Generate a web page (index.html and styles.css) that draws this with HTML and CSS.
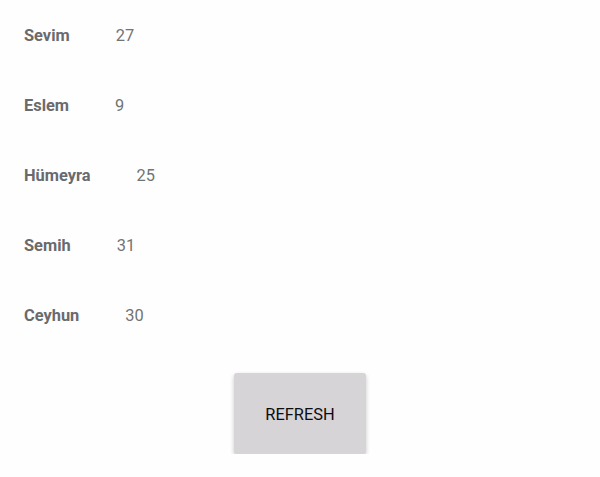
FILE: index.html
```html
<!DOCTYPE html>
<html>
<head>
<meta charset="utf-8">
<link rel="stylesheet" href="styles.css">
</head>
<body>
<div class="list">
  <div class="row"><span class="name">Sevim</span><span class="age">27</span></div>
  <div class="row"><span class="name">Eslem</span><span class="age">9</span></div>
  <div class="row"><span class="name">Hümeyra</span><span class="age">25</span></div>
  <div class="row"><span class="name">Semih</span><span class="age">31</span></div>
  <div class="row"><span class="name">Ceyhun</span><span class="age">30</span></div>
</div>
<div class="actions">
  <button class="refresh">REFRESH</button>
</div>
</body>
</html>
```
FILE: styles.css
```css
html, body {
  margin: 0;
  padding: 0;
  background: #fefefe;
  font-family: Roboto, "Liberation Sans", sans-serif;
}
.list {
  display: flex;
  flex-direction: column;
  padding-left: 24px;
}
.row {
  height: 70px;
  display: flex;
  align-items: center;
  font-size: 16.4px;
}
.name {
  font-weight: bold;
  color: #6a6a6d;
  margin-right: 46px;
}
.age {
  color: #737373;
}
.actions {
  display: flex;
  justify-content: center;
  padding-top: 23px;
}
.refresh {
  width: 132px;
  height: 81px;
  border: none;
  border-radius: 3px;
  background: #d6d4d7;
  color: #0d0d0d;
  font-family: Roboto, "Liberation Sans", sans-serif;
  font-size: 16.4px;
  padding: 2px 0 0 0;
  box-shadow: 0 2px 4px rgba(0,0,0,0.22);
}
```
